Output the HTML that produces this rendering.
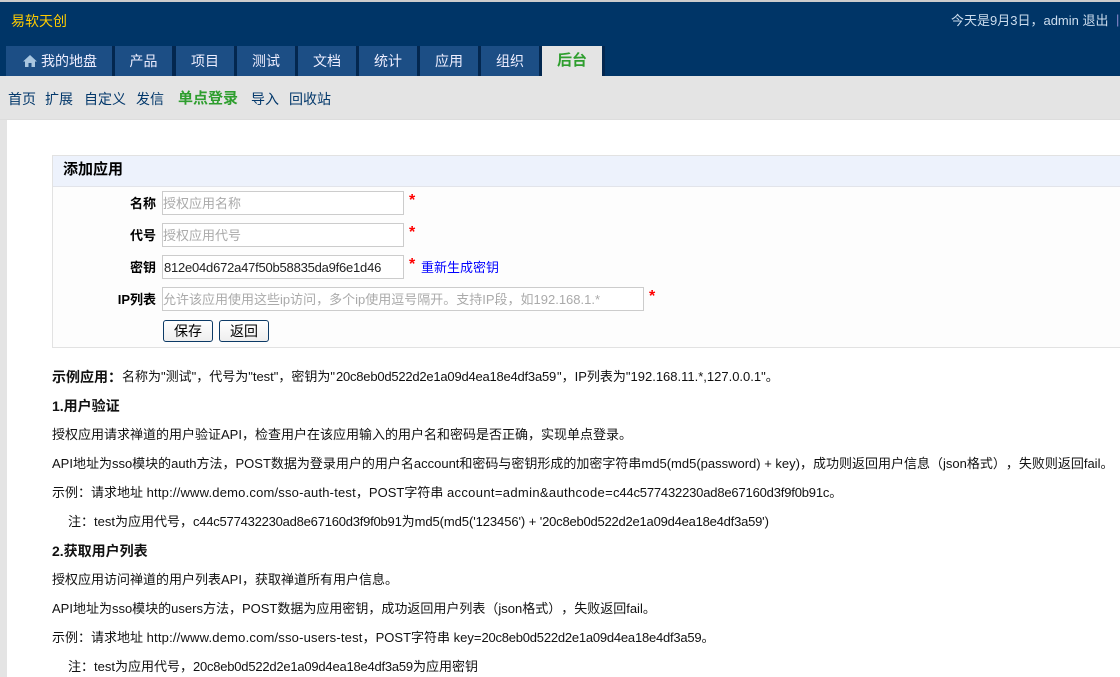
<!DOCTYPE html>
<html lang="zh"><head><meta charset="utf-8"><title>添加应用</title>
<style>
html,body{margin:0;padding:0;background:#fff}
body{width:1120px;height:677px;overflow:hidden;position:relative;font:13px/18px "Liberation Sans","WenQuanYi Zen Hei","Noto Sans CJK SC",sans-serif;color:#000;text-spacing-trim:space-all}
.a{position:absolute;white-space:nowrap}
.tab{position:absolute;top:46px;height:30px;background:#1c4e85;border-right:3px solid #03274f;color:#eef;font-size:14px;line-height:30px;text-align:center;box-sizing:content-box}
.nav{position:absolute;top:90px;font-size:14px;line-height:18px;color:#03386b;white-space:nowrap}
.lb{position:absolute;right:964px;font-weight:bold;white-space:nowrap;line-height:18px}
.in{position:absolute;left:162px;height:21px;padding:1px 0 0 0;box-sizing:content-box;width:240px;background:#fff;border:1px solid #ccc;line-height:22px;color:#aaa;white-space:nowrap;overflow:hidden}
.st{position:absolute;color:#f00;font-weight:bold;font-size:16px;line-height:16px}
.btn{position:absolute;top:320px;width:48px;height:20px;border:1px solid #0c3a66;border-radius:3px;background:linear-gradient(#fff,#eee);font-size:14px;line-height:20px;text-align:center}
.t{position:absolute;left:52px;white-space:nowrap;line-height:18px;color:#111}
.h{letter-spacing:-.22px}
.u{letter-spacing:.19px}
.b{font-weight:bold;font-size:14px}
</style></head><body>
<div class="a" style="left:0;top:0;width:1120px;height:76px;background:#003567;border-top:2px solid #ccc;box-sizing:border-box"></div>
<div class="a" style="left:11px;top:12px;color:#fc0;font-size:14px">易软天创</div>
<div class="a" style="left:951px;top:12px;color:#cde">今天是9月3日，admin 退出</div>
<div class="a" style="left:1116px;top:11px;color:#88c">|</div>
<div class="tab" style="left:6px;width:106px"><svg width="14" height="12" viewBox="0 0 14 12" style="vertical-align:-1px;margin:0 4px 0 2px"><path d="M7 0L0 6.500h2V12h3.500V8h3v4H12V6.500h2z" fill="#a9c6e0"/></svg>我的地盘</div>
<div class="tab" style="left:115px;width:57px">产品</div>
<div class="tab" style="left:176px;width:58px">项目</div>
<div class="tab" style="left:237px;width:58px">测试</div>
<div class="tab" style="left:298px;width:58px">文档</div>
<div class="tab" style="left:359px;width:58px">统计</div>
<div class="tab" style="left:420px;width:58px">应用</div>
<div class="tab" style="left:481px;width:58px">组织</div>
<div class="tab" style="left:542px;width:60px;background:#e4e4e4;color:#2e9e2e;font-weight:bold;font-size:15px">后台</div>
<div class="a" style="left:172px;top:46px;width:4px;height:30px;background:#03274f"></div>
<div class="a" style="left:0;top:76px;width:1120px;height:44px;background:#e4e4e4"></div>
<div class="a" style="left:0;top:119px;width:1120px;height:1px;background:#ddd"></div>
<div class="a" style="left:0;top:120px;width:7px;height:557px;background:#e4e4e4"></div>
<div class="nav" style="left:8px">首页</div>
<div class="nav" style="left:45px">扩展</div>
<div class="nav" style="left:84px">自定义</div>
<div class="nav" style="left:136px">发信</div>
<div class="nav" style="left:178px;color:#2e9e2e;font-weight:bold;font-size:15px">单点登录</div>
<div class="nav" style="left:251px">导入</div>
<div class="nav" style="left:289px">回收站</div>
<div class="a" style="left:52px;top:155px;width:1068px;height:193px;background:#fdfdfd;border:1px solid #e2e2e2;border-right:0;box-sizing:border-box"></div>
<div class="a" style="left:53px;top:156px;width:1067px;height:30px;background:#edf2fc;border-bottom:1px solid #e2e4ea"></div>
<div class="a" style="left:63px;top:161px;font-size:15px;font-weight:bold;line-height:18px">添加应用</div>
<div class="lb" style="top:195px">名称</div>
<div class="lb" style="top:227px">代号</div>
<div class="lb" style="top:259px">密钥</div>
<div class="lb" style="top:291px">IP列表</div>
<div class="in" style="top:191px">授权应用名称</div>
<div class="in" style="top:223px">授权应用代号</div>
<div class="in" style="top:255px;color:#222;letter-spacing:-.22px;padding-left:1px;width:239px">812e04d672a47f50b58835da9f6e1d46</div>
<div class="in" style="top:287px;width:480px">允许该应用使用这些ip访问，多个ip使用逗号隔开。支持IP段，如192.168.1.*</div>
<div class="st" style="left:409px;top:193px">*</div>
<div class="st" style="left:409px;top:225px">*</div>
<div class="st" style="left:409px;top:257px">*</div>
<div class="st" style="left:649px;top:289px">*</div>
<div class="a" style="left:421px;top:259px;color:#00f">重新生成密钥</div>
<div class="btn" style="left:163px">保存</div>
<div class="btn" style="left:219px">返回</div>
<div class="t b" style="top:368px">示例应用：</div>
<div class="t" style="top:368px;left:122px">名称为"测试"，代号为"test"，密钥为"</div>
<div class="t h" style="top:368px;left:336px">20c8eb0d522d2e1a09d4ea18e4df3a59</div>
<div class="t" style="top:368px;left:557px">"，IP列表为"192.168.11.*,127.0.0.1"。</div>
<div class="t b" style="top:397px">1.用户验证</div>
<div class="t" style="top:426px">授权应用请求禅道的用户验证API，检查用户在该应用输入的用户名和密码是否正确，实现单点登录。</div>
<div class="t" style="top:455px">API地址为sso模块的auth方法，POST数据为登录用户的用户名account和密码与密钥形成的加密字符串md5(md5(password) + key)，成功则返回用户信息（json格式），失败则返回fail。</div>
<div class="t" style="top:484px">示例：请求地址 <span class="u">http://www.demo.com/sso-auth-test</span>，POST字符串 <span style="letter-spacing:.34px">account=admin&amp;authcode=</span><span style="letter-spacing:-.18px">c44c577432230ad8e67160d3f9f0b91c</span>。</div>
<div class="t" style="top:513px;left:68px">注：test为应用代号，<span class="h">c44c577432230ad8e67160d3f9f0b91</span>为<span style="letter-spacing:-.08px">md5(md5('123456') + '</span><span class="h">20c8eb0d522d2e1a09d4ea18e4df3a59</span>')</div>
<div class="t b" style="top:542px">2.获取用户列表</div>
<div class="t" style="top:571px">授权应用访问禅道的用户列表API，获取禅道所有用户信息。</div>
<div class="t" style="top:600px">API地址为sso模块的users方法，POST数据为应用密钥，成功返回用户列表（json格式），失败返回fail。</div>
<div class="t" style="top:629px">示例：请求地址 <span class="u">http://www.demo.com/sso-users-test</span>，POST字符串 key=<span class="h">20c8eb0d522d2e1a09d4ea18e4df3a59</span>。</div>
<div class="t" style="top:658px;left:68px">注：test为应用代号，<span class="h">20c8eb0d522d2e1a09d4ea18e4df3a59</span>为应用密钥</div>
</body></html>
